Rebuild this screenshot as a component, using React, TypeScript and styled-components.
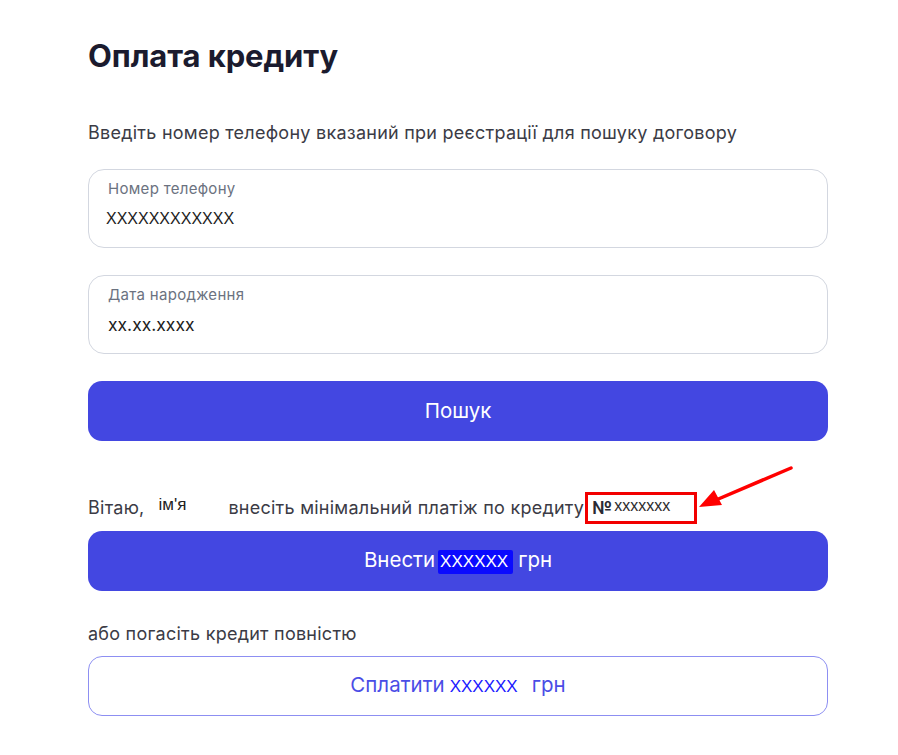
import React from "react";
import styled, { createGlobalStyle } from "styled-components";

const GlobalStyle = createGlobalStyle`
  body {
    margin: 0;
    background: #ffffff;
    font-family: Inter, "Noto Sans", sans-serif;
  }
`;

const Page = styled.div`
  width: 740px;
  padding: 36px 0 40px 88px;
  display: flex;
  flex-direction: column;
  position: relative;
`;

const Title = styled.h1`
  margin: 0;
  font-size: 31px;
  line-height: 40px;
  font-weight: 700;
  color: #1b1b2e;
  letter-spacing: -0.1px;
`;

const Hint = styled.p<{ $top: number; $bottom: number }>`
  margin: ${(p) => p.$top}px 0 ${(p) => p.$bottom}px;
  font-size: 18px;
  letter-spacing: 0.25px;
  line-height: 22px;
  color: #3b3b45;
`;

const Field = styled.div`
  box-sizing: border-box;
  height: 79px;
  border: 1px solid #d3d7e0;
  border-radius: 16px;
  padding: 10px 20px 0 19px;
  display: flex;
  flex-direction: column;
  margin-bottom: 27px;
`;

const FieldLabel = styled.span`
  font-size: 15px;
  letter-spacing: 0.3px;
  line-height: 18px;
  color: #6b7280;
`;

const FieldValue = styled.span<{ $inter?: boolean }>`
  margin-top: 11px;
  margin-left: ${(p) => (p.$inter ? "0" : "-2px")};
  font-family: ${(p) => (p.$inter ? "Inter, sans-serif" : '"Liberation Sans", Arial, sans-serif')};
  font-size: ${(p) => (p.$inter ? "17.5px" : "16px")};
  line-height: 20px;
  color: #1c1c1c;
`;

const Button = styled.button<{ $outline?: boolean }>`
  box-sizing: border-box;
  width: 740px;
  height: 60px;
  border-radius: 14px;
  border: ${(p) => (p.$outline ? "1.5px solid #8d8ff2" : "none")};
  background: ${(p) => (p.$outline ? "#ffffff" : "#4347e1")};
  color: ${(p) => (p.$outline ? "#4a4de6" : "#ffffff")};
  font-family: Inter, "Noto Sans", sans-serif;
  font-size: 20.5px;
  display: flex;
  align-items: center;
  justify-content: center;
  cursor: pointer;
  padding: 0;
`;

const ButtonText = styled.span`
  display: block;
  line-height: 24px;
  white-space: nowrap;
`;

const Amount = styled.span<{ $marked?: boolean }>`
  font-family: "Liberation Sans", Arial, sans-serif;
  font-size: 17px;
  margin: 0 ${(p) => (p.$marked ? "5px" : "14px")} 0 ${(p) => (p.$marked ? "3px" : "5px")};
  padding: ${(p) => (p.$marked ? "2px 5px 3px 2px" : "0")};
  background: ${(p) => (p.$marked ? "#0a0aff" : "transparent")};
  color: ${(p) => (p.$marked ? "#ffffff" : "#1a1aff")};
  border-radius: 2px;
`;

const Greeting = styled.div`
  margin-top: 51px;
  margin-bottom: 7px;
  display: flex;
  align-items: center;
  font-size: 18px;
  letter-spacing: 0.25px;
  line-height: 22px;
  color: #3b3b45;
  white-space: nowrap;
`;

const Name = styled.span`
  font-family: "Liberation Sans", Arial, sans-serif;
  font-size: 17px;
  letter-spacing: 0;
  color: #222;
  position: relative;
  top: -3px;
  padding: 0 42px 0 14px;
`;

const Marked = styled.span`
  box-sizing: border-box;
  display: inline-flex;
  align-items: center;
  height: 32px;
  width: 112px;
  margin-left: 1px;
  padding-left: 4px;
  border: 3px solid #f20000;
  color: #2b2b2b;
`;

const NumberSign = styled.b`
  font-size: 18px;
  color: #2a2a33;
`;

const NumberValue = styled.span`
  font-family: "Liberation Sans", Arial, sans-serif;
  font-size: 16px;
  letter-spacing: 0;
  margin-left: 2px;
  position: relative;
  top: -2px;
`;

const Arrow = styled.svg`
  position: absolute;
  left: 694px;
  top: 462px;
`;

export default function App() {
  return (
    <>
      <GlobalStyle />
      <Page>
        <Title>Оплата кредиту</Title>
        <Hint $top={46} $bottom={25}>
          Введіть номер телефону вказаний при реєстрації для пошуку договору
        </Hint>
        <Field>
          <FieldLabel>Номер телефону</FieldLabel>
          <FieldValue>XXXXXXXXXXXX</FieldValue>
        </Field>
        <Field>
          <FieldLabel>Дата народження</FieldLabel>
          <FieldValue $inter>xx.xx.xxxx</FieldValue>
        </Field>
        <Button>
          <ButtonText>Пошук</ButtonText>
        </Button>
        <Greeting>
          Вітаю,
          <Name>ім'я</Name>
          внесіть мінімальний платіж по кредиту
          <Marked>
            <NumberSign>№</NumberSign>
            <NumberValue>xxxxxxx</NumberValue>
          </Marked>
        </Greeting>
        <Button>
          <ButtonText>
            Внести<Amount $marked>XXXXXX</Amount>грн
          </ButtonText>
        </Button>
        <Hint $top={32} $bottom={11}>
          або погасіть кредит повністю
        </Hint>
        <Button $outline>
          <ButtonText>
            Сплатити<Amount>XXXXXX</Amount>грн
          </ButtonText>
        </Button>
        <Arrow width="104" height="52" viewBox="0 0 104 52">
          <line x1="97" y1="6" x2="22" y2="38" stroke="#f00" strokeWidth="3.5" strokeLinecap="round" />
          <polygon points="5,45 20,28 28,43" fill="#f00" />
        </Arrow>
      </Page>
    </>
  );
}
